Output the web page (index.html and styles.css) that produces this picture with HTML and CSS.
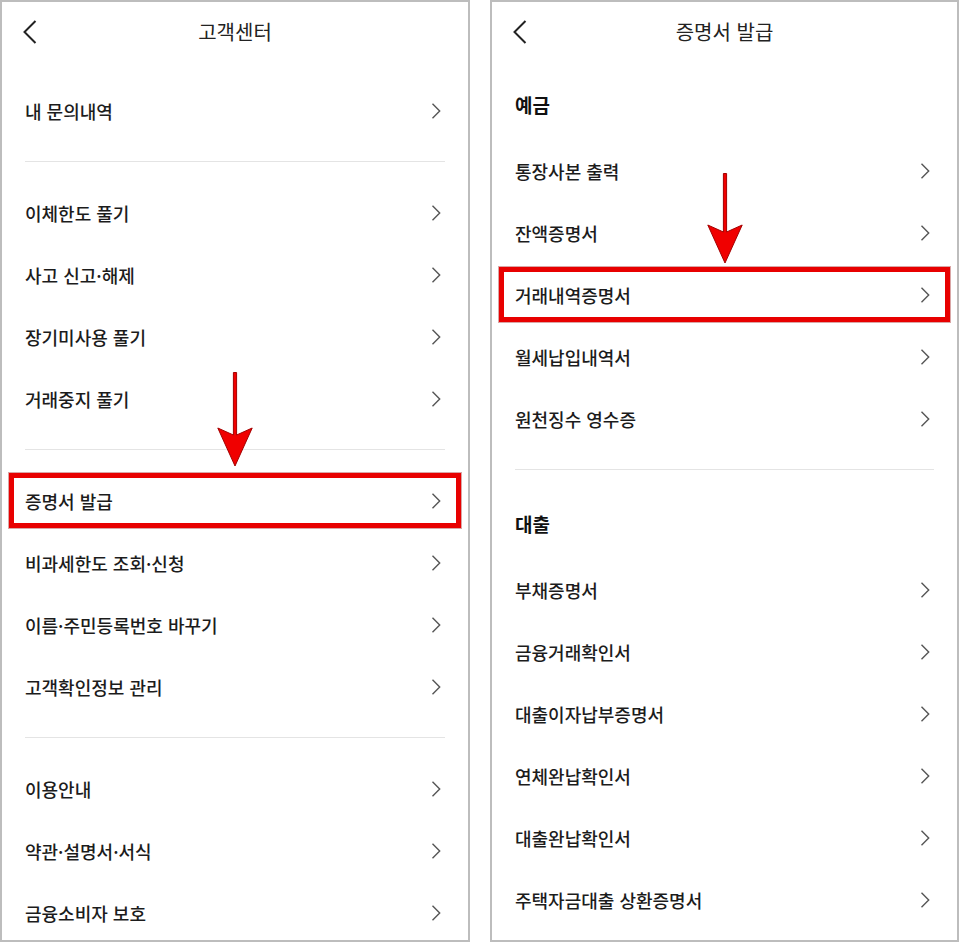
FILE: index.html
```html
<!DOCTYPE html>
<html lang="ko">
<head>
    <meta charset="UTF-8">
    <meta name="viewport" content="width=device-width, initial-scale=1.0">
    <title>고객센터 / 증명서 발급</title>
    <link rel="stylesheet" href="styles.css">
</head>
<body>
    <div class="screens">
        <!-- 고객센터 -->
        <div class="panel">
            <div class="header">
                <svg class="back" width="14" height="24" viewBox="0 0 14 24"><path d="M12.5 1 L1.5 12 L12.5 23" /></svg>
                <div class="title">고객센터</div>
                <div></div>
            </div>
            <div class="list">
                <div class="row"><span>내 문의내역</span><svg class="chev" width="10" height="16" viewBox="0 0 10 16"><path d="M1.5 0.8 L8.7 8 L1.5 15.2" /></svg></div>
                <div class="divider"></div>
                <div class="row"><span>이체한도 풀기</span><svg class="chev" width="10" height="16" viewBox="0 0 10 16"><path d="M1.5 0.8 L8.7 8 L1.5 15.2" /></svg></div>
                <div class="row"><span>사고 신고·해제</span><svg class="chev" width="10" height="16" viewBox="0 0 10 16"><path d="M1.5 0.8 L8.7 8 L1.5 15.2" /></svg></div>
                <div class="row"><span>장기미사용 풀기</span><svg class="chev" width="10" height="16" viewBox="0 0 10 16"><path d="M1.5 0.8 L8.7 8 L1.5 15.2" /></svg></div>
                <div class="row"><span>거래중지 풀기</span><svg class="chev" width="10" height="16" viewBox="0 0 10 16"><path d="M1.5 0.8 L8.7 8 L1.5 15.2" /></svg></div>
                <div class="divider"></div>
                <div class="row marked"><span>증명서 발급</span><svg class="chev" width="10" height="16" viewBox="0 0 10 16"><path d="M1.5 0.8 L8.7 8 L1.5 15.2" /></svg></div>
                <div class="row"><span>비과세한도 조회·신청</span><svg class="chev" width="10" height="16" viewBox="0 0 10 16"><path d="M1.5 0.8 L8.7 8 L1.5 15.2" /></svg></div>
                <div class="row"><span>이름·주민등록번호 바꾸기</span><svg class="chev" width="10" height="16" viewBox="0 0 10 16"><path d="M1.5 0.8 L8.7 8 L1.5 15.2" /></svg></div>
                <div class="row"><span>고객확인정보 관리</span><svg class="chev" width="10" height="16" viewBox="0 0 10 16"><path d="M1.5 0.8 L8.7 8 L1.5 15.2" /></svg></div>
                <div class="divider"></div>
                <div class="row"><span>이용안내</span><svg class="chev" width="10" height="16" viewBox="0 0 10 16"><path d="M1.5 0.8 L8.7 8 L1.5 15.2" /></svg></div>
                <div class="row"><span>약관·설명서·서식</span><svg class="chev" width="10" height="16" viewBox="0 0 10 16"><path d="M1.5 0.8 L8.7 8 L1.5 15.2" /></svg></div>
                <div class="row"><span>금융소비자 보호</span><svg class="chev" width="10" height="16" viewBox="0 0 10 16"><path d="M1.5 0.8 L8.7 8 L1.5 15.2" /></svg></div>
            </div>
            <svg class="arrow arrow-left" width="36" height="95" viewBox="0 0 36 95"><path d="M18 94 L0.8 56 L16.4 63 L16.4 0.5 L19.6 0.5 L19.6 63 L35.2 56 Z" /></svg>
        </div>

        <!-- 증명서 발급 -->
        <div class="panel">
            <div class="header">
                <svg class="back" width="14" height="24" viewBox="0 0 14 24"><path d="M12.5 1 L1.5 12 L12.5 23" /></svg>
                <div class="title">증명서 발급</div>
                <div></div>
            </div>
            <div class="section-title">예금</div>
            <div class="row"><span>통장사본 출력</span><svg class="chev" width="10" height="16" viewBox="0 0 10 16"><path d="M1.5 0.8 L8.7 8 L1.5 15.2" /></svg></div>
            <div class="row"><span>잔액증명서</span><svg class="chev" width="10" height="16" viewBox="0 0 10 16"><path d="M1.5 0.8 L8.7 8 L1.5 15.2" /></svg></div>
            <div class="row marked"><span>거래내역증명서</span><svg class="chev" width="10" height="16" viewBox="0 0 10 16"><path d="M1.5 0.8 L8.7 8 L1.5 15.2" /></svg></div>
            <div class="row"><span>월세납입내역서</span><svg class="chev" width="10" height="16" viewBox="0 0 10 16"><path d="M1.5 0.8 L8.7 8 L1.5 15.2" /></svg></div>
            <div class="row"><span>원천징수 영수증</span><svg class="chev" width="10" height="16" viewBox="0 0 10 16"><path d="M1.5 0.8 L8.7 8 L1.5 15.2" /></svg></div>
            <div class="divider"></div>
            <div class="section-title next">대출</div>
            <div class="row"><span>부채증명서</span><svg class="chev" width="10" height="16" viewBox="0 0 10 16"><path d="M1.5 0.8 L8.7 8 L1.5 15.2" /></svg></div>
            <div class="row"><span>금융거래확인서</span><svg class="chev" width="10" height="16" viewBox="0 0 10 16"><path d="M1.5 0.8 L8.7 8 L1.5 15.2" /></svg></div>
            <div class="row"><span>대출이자납부증명서</span><svg class="chev" width="10" height="16" viewBox="0 0 10 16"><path d="M1.5 0.8 L8.7 8 L1.5 15.2" /></svg></div>
            <div class="row"><span>연체완납확인서</span><svg class="chev" width="10" height="16" viewBox="0 0 10 16"><path d="M1.5 0.8 L8.7 8 L1.5 15.2" /></svg></div>
            <div class="row"><span>대출완납확인서</span><svg class="chev" width="10" height="16" viewBox="0 0 10 16"><path d="M1.5 0.8 L8.7 8 L1.5 15.2" /></svg></div>
            <div class="row"><span>주택자금대출 상환증명서</span><svg class="chev" width="10" height="16" viewBox="0 0 10 16"><path d="M1.5 0.8 L8.7 8 L1.5 15.2" /></svg></div>
            <svg class="arrow arrow-right" width="36" height="91" viewBox="0 0 36 91"><path d="M18 90 L0.8 52 L16.4 59 L16.4 0.5 L19.6 0.5 L19.6 59 L35.2 52 Z" /></svg>
        </div>
    </div>
</body>
</html>
```

FILE: styles.css
```css
* {
    box-sizing: border-box;
}

body {
    margin: 0;
    background: #fff;
    font-family: "Noto Sans CJK KR", "Noto Sans", sans-serif;
    color: #1c1c1c;
}

.screens {
    display: flex;
    gap: 20px;
    width: 959px;
    height: 942px;
}

.panel {
    position: relative;
    height: 942px;
    border: 2px solid #bdbdbd;
    background: #fff;
    overflow: hidden;
}

.panel:first-child {
    width: 470px;
}

.panel:last-child {
    width: 469px;
}

.header {
    display: grid;
    grid-template-columns: 1fr auto 1fr;
    align-items: center;
    height: 58px;
    padding: 0 21px;
}

.back {
    margin-top: 2px;
}

.back path {
    fill: none;
    stroke: #222;
    stroke-width: 2;
}

.title {
    font-size: 20px;
    color: #222;
}

.list {
    padding-top: 20px;
}

.row {
    position: relative;
    display: flex;
    align-items: center;
    justify-content: space-between;
    height: 62px;
    padding: 0 27px 0 23px;
    font-size: 18px;
    font-weight: 500;
}

.chev path {
    fill: none;
    stroke: #555;
    stroke-width: 1.4;
}

.divider {
    height: 1px;
    margin: 19px 23px 20px 23px;
    background: #e4e4e4;
}

.section-title {
    padding: 30px 23px 20px;
    font-size: 19px;
    font-weight: 700;
    line-height: 30px;
    color: #111;
}

.section-title.next {
    padding-top: 19px;
}

/* red highlight box around the selected menu */
.marked::after {
    content: "";
    position: absolute;
    left: 7px;
    right: 7px;
    top: 3px;
    bottom: 4px;
    border: 5px solid #e80000;
    box-shadow: 0 0 0 1px rgba(150, 0, 0, 0.35);
}

.arrow {
    position: absolute;
    left: 215px;
}

.arrow path {
    fill: #f00000;
    stroke: #a30000;
    stroke-width: 1;
}

.arrow-left {
    top: 370px;
}

.arrow-right {
    top: 171px;
}
```
